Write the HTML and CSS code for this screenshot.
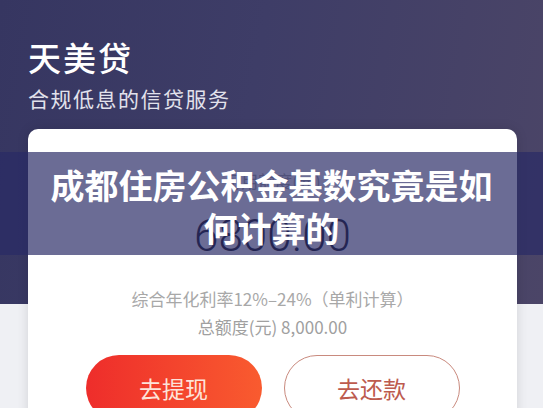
FILE: index.html
```html
<!DOCTYPE html>
<html lang="zh-CN">
<head>
  <meta charset="UTF-8">
  <meta name="viewport" content="width=device-width, initial-scale=1.0">
  <title>成都住房公积金基数究竟是如何计算的</title>
  <link rel="stylesheet" href="styles.css">
</head>
<body>
  <div class="page">
    <div class="header">
      <h2 class="brand">天美贷</h2>
      <p class="slogan">合规低息的信贷服务</p>
    </div>

    <div class="card">
      <div class="quota-label">可用额度(元)</div>
      <div class="quota">6800.00</div>
      <div class="rate">综合年化利率12%–24%（单利计算）</div>
      <div class="total">总额度(元) 8,000.00</div>
      <div class="actions">
        <button type="button" class="btn btn-primary">去提现</button>
        <button type="button" class="btn btn-outline">去还款</button>
      </div>
    </div>

    <div class="banner">
      <h1>成都住房公积金基数究竟是如何计算的</h1>
    </div>
  </div>
</body>
</html>
```

FILE: styles.css
```css
html, body {
  margin: 0;
  height: 100%;
  overflow: hidden;
}
body {
  font-family: "Noto Sans CJK SC", "Noto Sans", sans-serif;
  background: #eff0f4;
}
.page {
  position: relative;
  height: 408px;
  background:
    linear-gradient(100deg, #363661 0%, #3e3d67 45%, #4b4567 100%) top / 100% 304px no-repeat,
    #eff0f4;
}
.header {
  padding: 37px 28px 0;
  color: #fff;
}
.brand {
  margin: 0;
  font-size: 33px;
  line-height: 40px;
  font-weight: 500;
  letter-spacing: 2px;
}
.slogan {
  margin: 7px 0 0;
  font-size: 21px;
  line-height: 28px;
  letter-spacing: 1.5px;
  color: #e2e2ec;
}
.card {
  margin: 17px 26px 0 28px;
  padding-top: 40px;
  height: 400px;
  background: #fff;
  border-radius: 10px;
  box-shadow: 0 0 12px rgba(0, 0, 0, 0.12);
  text-align: center;
}
.quota-label {
  font-size: 17px;
  line-height: 24px;
  color: #a8a8a8;
}
.quota {
  margin-top: 17px;
  font-family: Roboto, "Liberation Sans", sans-serif;
  font-weight: 300;
  font-size: 44px;
  line-height: 52px;
  color: #1c1c2c;
}
.rate {
  margin-top: 23px;
  font-size: 17px;
  line-height: 28px;
  color: #a8a8a8;
}
.total {
  font-size: 17px;
  line-height: 28px;
  color: #a0a0a0;
}
.actions {
  display: flex;
  justify-content: center;
  gap: 22px;
  margin-top: 14px;
}
.btn {
  width: 176px;
  height: 66px;
  border-radius: 33px;
  font-family: "Noto Sans CJK SC", sans-serif;
  font-size: 23px;
  cursor: pointer;
}
.btn-primary {
  border: none;
  background: linear-gradient(90deg, #ee2d2b, #f95b2f);
  color: #fde3da;
}
.btn-outline {
  border: 1.5px solid #c98a7e;
  background: #fff;
  color: #bd5b4e;
}
.banner {
  position: absolute;
  top: 152px;
  left: 0;
  right: 0;
  height: 103px;
  box-sizing: border-box;
  padding: 11px 48px 0;
  background: rgba(40, 42, 102, 0.69);
}
.banner h1 {
  margin: 0;
  font-size: 34px;
  line-height: 43px;
  font-weight: 700;
  color: #fff;
  text-align: center;
}
```
